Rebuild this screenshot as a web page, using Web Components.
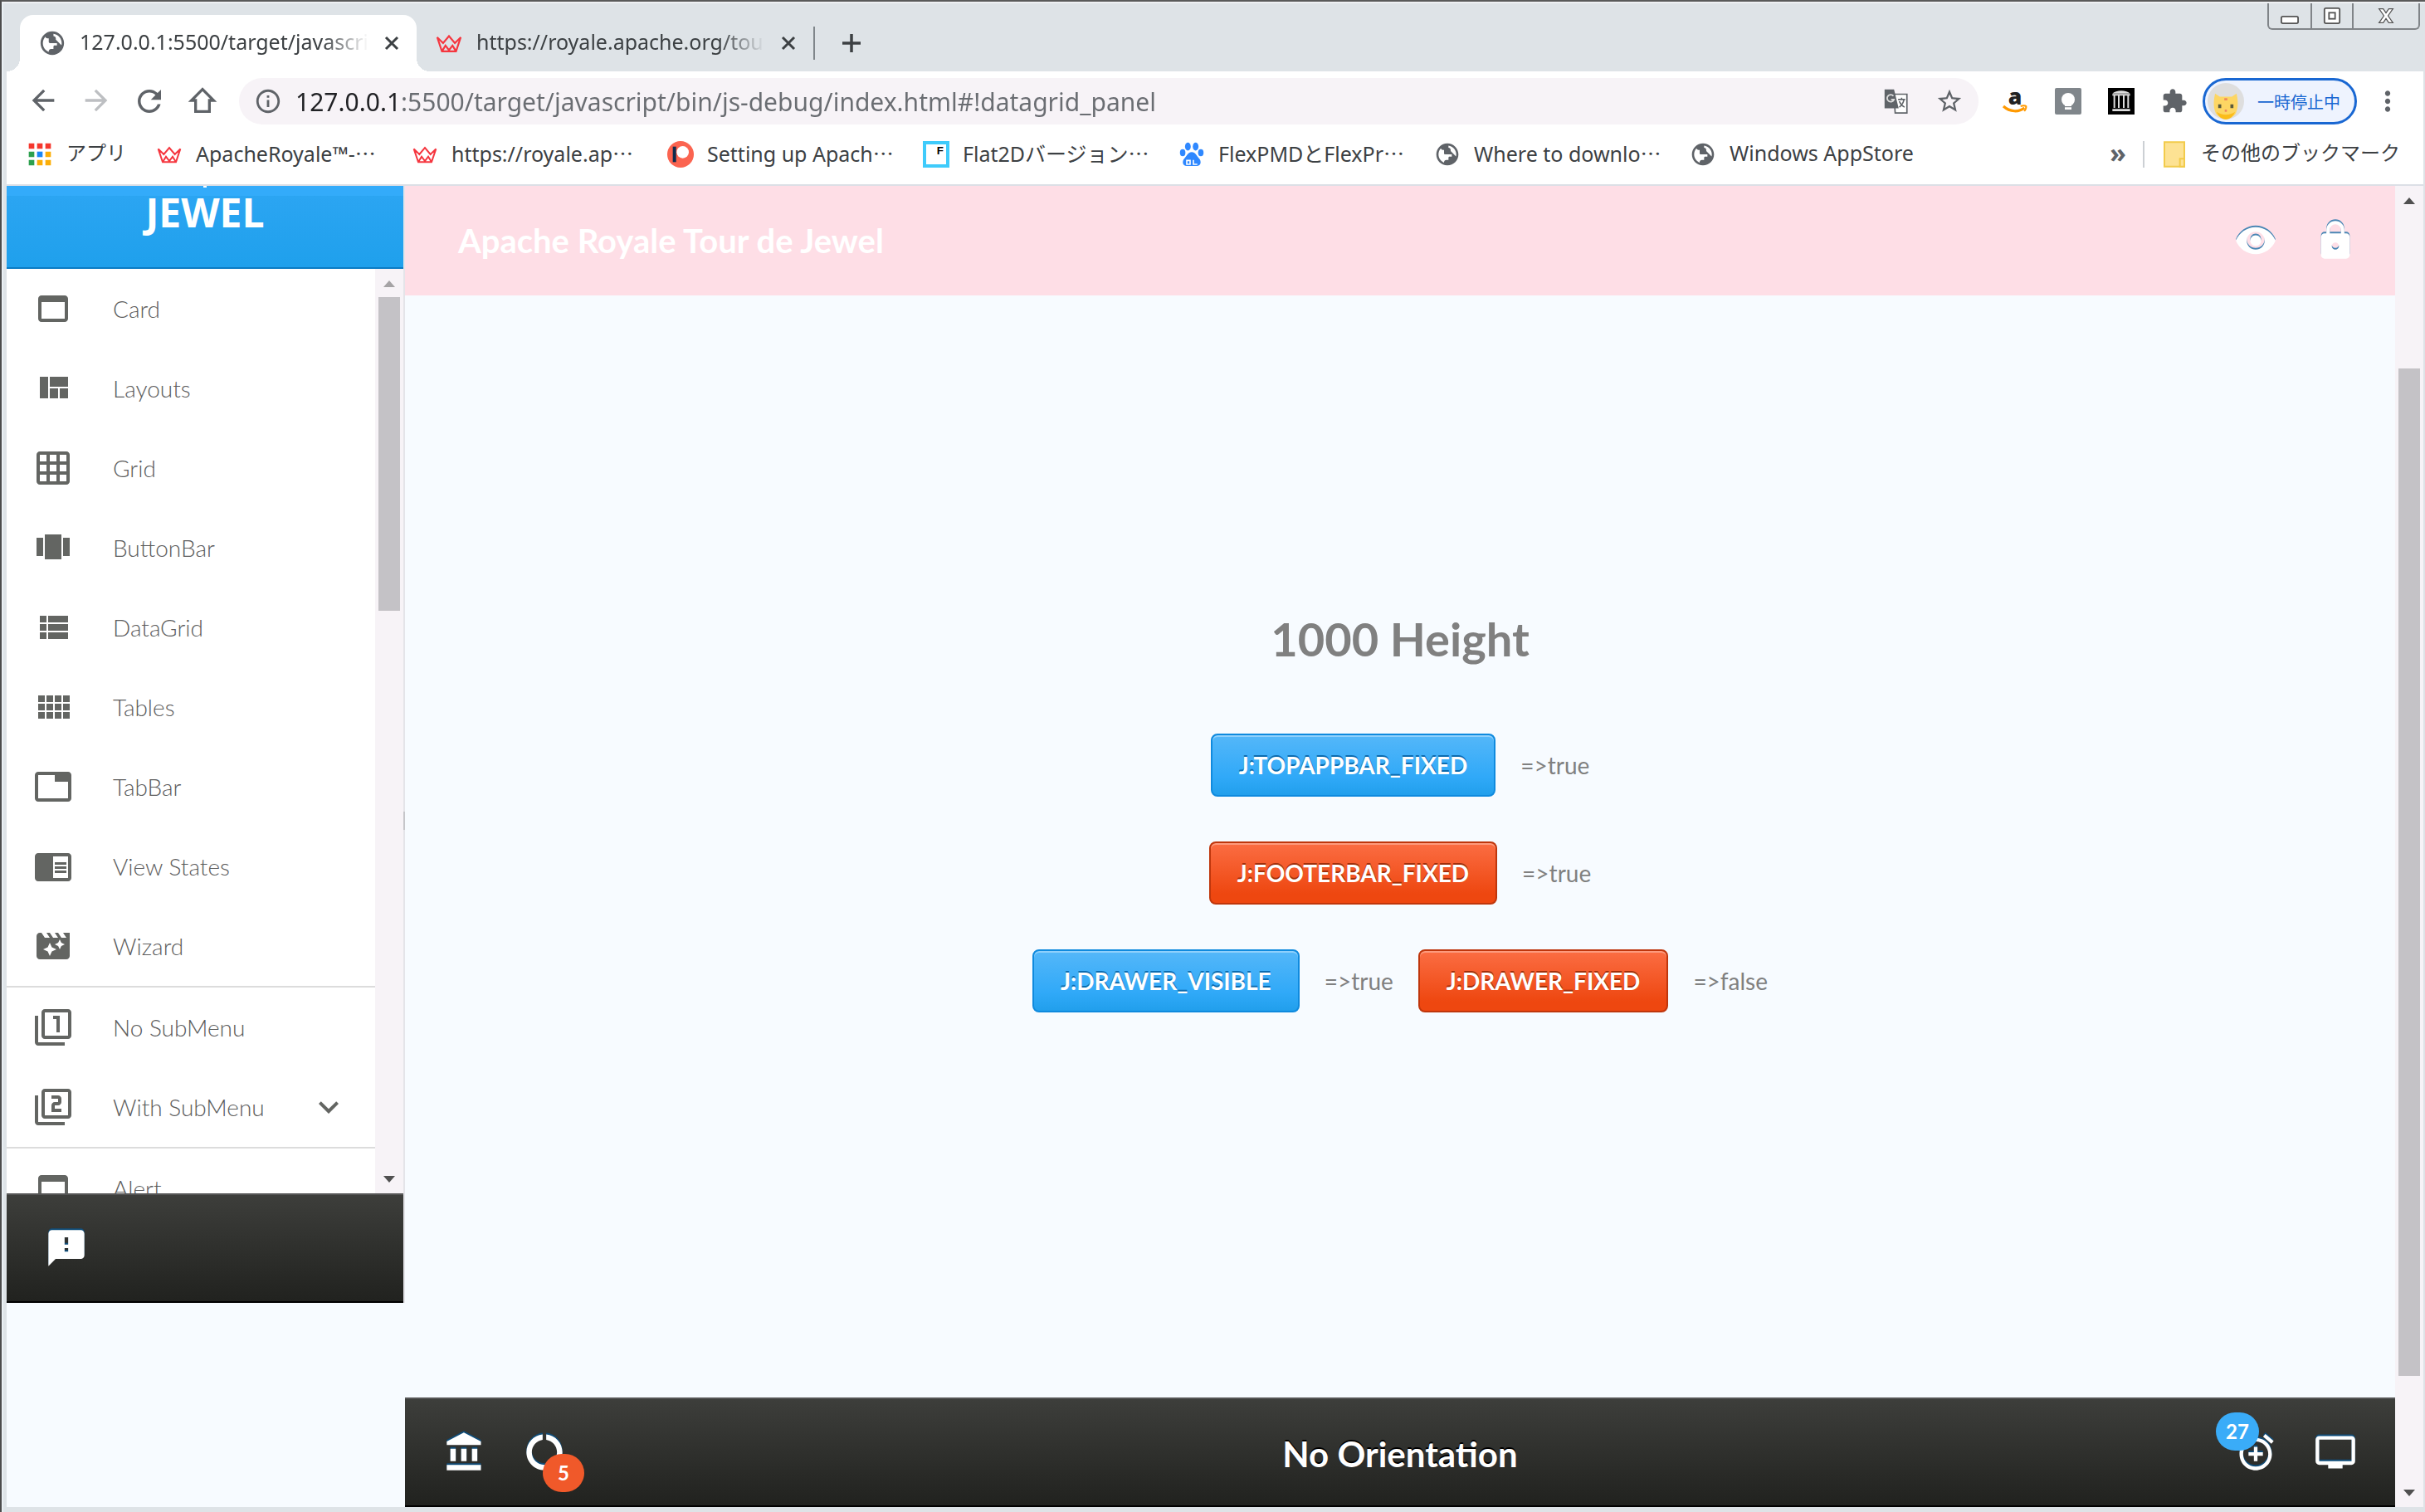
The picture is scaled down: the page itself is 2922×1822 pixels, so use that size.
<!DOCTYPE html>
<html lang="ja">
<head>
<meta charset="utf-8">
<title>Apache Royale Tour de Jewel</title>
<style>
  html, body { height: 100%; margin: 0; }
  body {
    --ui-font: "Noto Sans", "Noto Sans CJK JP", sans-serif;
    --jewel-font: Lato, "Liberation Sans", sans-serif;
    --page-bg: #f7fbff;
    --frame: #dee3e7;
    --track: #f7f3f7;
    font-family: var(--ui-font);
    overflow: hidden;
  }
</style>
</head>
<body>
<browser-window></browser-window>

<script>
const ICONS = {
  globe: '<path d="M12 2C6.48 2 2 6.48 2 12s4.48 10 10 10 10-4.48 10-10S17.52 2 12 2zm-1 17.93c-3.95-.49-7-3.85-7-7.93 0-.62.08-1.21.21-1.79L9 15v1c0 1.1.9 2 2 2v1.93zm6.9-2.54c-.26-.81-1-1.39-1.9-1.39h-1v-3c0-.55-.45-1-1-1H8v-2h2c.55 0 1-.45 1-1V7h2c1.1 0 2-.9 2-2v-.41c2.93 1.19 5 4.06 5 7.41 0 2.08-.8 3.97-2.1 5.39z" transform="rotate(180 12 12)"/>',
  crown: '<path d="M2 7l4 12h12l4-12-5 5-5-6-5 6zM6 19l3-5 3 4 3-4 3 5" fill="none" stroke="#f5363f" stroke-width="1.5"/>',
  close: '<path d="M5 5l14 14M19 5L5 19" fill="none" stroke="currentColor" stroke-width="3"/>',
  plus: '<path d="M12 1v22M1 12h22" fill="none" stroke="currentColor" stroke-width="3.5"/>',
  back: '<path d="M20 11H7.83l5.59-5.59L12 4l-8 8 8 8 1.41-1.41L7.83 13H20v-2z"/>',
  forward: '<path d="M12 4l-1.41 1.41L16.17 11H4v2h12.17l-5.58 5.59L12 20l8-8z"/>',
  reload: '<path d="M17.65 6.35C16.2 4.9 14.21 4 12 4c-4.42 0-7.99 3.58-7.99 8s3.57 8 7.99 8c3.73 0 6.84-2.55 7.73-6h-2.08c-.82 2.33-3.04 4-5.65 4-3.31 0-6-2.69-6-6s2.69-6 6-6c1.66 0 3.14.69 4.22 1.78L13 11h7V4l-2.35 2.35z"/>',
  home: '<path d="M12 4l-8 8h3v8h10v-8h3z" fill="none" stroke="currentColor" stroke-width="2"/>',
  info: '<path d="M11 17h2v-6h-2v6zm1-15C6.48 2 2 6.48 2 12s4.48 10 10 10 10-4.48 10-10S17.52 2 12 2zm0 18c-4.41 0-8-3.59-8-8s3.59-8 8-8 8 3.59 8 8-3.59 8-8 8zM11 9h2V7h-2v2z"/>',
  translate: '<path d="M10 6h11v16H11z" fill="#fff" stroke="#5f6368" stroke-width="1.2"/><path d="M2 2h8l4 16H2z"/><path d="M9.500 7.500A3 3 0 1 0 10 10.500H7.500" fill="none" stroke="#ddd" stroke-width="1.3"/><path d="M13.500 10.500h6M16.500 9v1.500M18.500 10.500c-.5 3-2 5-4 6.500M14.500 12c1 2.500 2.500 4 4.500 5" fill="none" stroke="#5f6368" stroke-width="1.100"/>',
  star: '<path d="M22 9.240l-7.190-.62L12 2 9.190 8.630 2 9.240l5.460 4.730L5.820 21 12 17.270 18.180 21l-1.630-7.030L22 9.240zM12 15.400l-3.760 2.270 1-4.280-3.320-2.880 4.380-.38L12 6.100l1.710 4.040 4.380.38-3.320 2.880 1 4.280L12 15.400z"/>',
  amazon: '<text x="12" y="15" text-anchor="middle" font-family="Open Sans, sans-serif" font-weight="800" font-size="20" fill="#222">a</text><path d="M1.500 16.500c6 5.500 14 5.500 19 1.500" fill="none" stroke="#ff9900" stroke-width="2.400"/><path d="M17 16.500c2-.7 4-.8 5 0 .3 1.500-.4 3-1.600 4.500" fill="none" stroke="#ff9900" stroke-width="1.500"/>',
  bulb: '<rect width="24" height="24" rx="1.500" fill="#80868b"/><circle cx="12" cy="10.500" r="6" fill="#fff"/><path d="M9 15h6v1.500H9zM9 17.500h6v2H9z" fill="#fff"/>',
  archive: '<rect width="24" height="24" fill="#000"/><path d="M4 5c3-3.500 13-3.500 16 0zM4 19h16v2H4zM5 7h1.500v11H5zM9 7h1.500v11H9zM13.500 7H15v11h-1.500zM17.500 7H19v11h-1.500zM4 5.500h16V7H4z" fill="#ddd"/>',
  puzzle: '<path d="M20.500 11H19V7c0-1.100-.9-2-2-2h-4V3.500C13 2.120 11.880 1 10.500 1S8 2.120 8 3.500V5H4c-1.100 0-1.990.9-1.990 2v3.800H3.500c1.490 0 2.700 1.210 2.700 2.700s-1.210 2.700-2.700 2.700H2V20c0 1.100.9 2 2 2h3.800v-1.500c0-1.490 1.210-2.700 2.700-2.700 1.490 0 2.700 1.210 2.700 2.700V22H17c1.100 0 2-.9 2-2v-4h1.500c1.380 0 2.500-1.120 2.500-2.500S21.880 11 20.500 11z"/>',
  avatar: '<circle cx="12" cy="12" r="12" fill="#dedede"/><path d="M5 7l3 2h8l3-2c1 4 1.500 9-.5 13-3 4.500-10 4.500-13 0C3.500 16 4 11 5 7z" fill="#fdd663"/><path d="M6 19c3 2.500 9 2.500 12 0-1 3-3.500 5-6 5s-5-2-6-5z" fill="#fbbc1a"/><path d="M7 14h2v2.500H7zM15 14h2v2.500h-2z" fill="#5a5a3c"/><path d="M11.300 17.500h1.400v1.500h-1.400zM11 10h2v1.500h-2z" fill="#f08a5c"/>',
  kebab: '<path d="M12 8c1.100 0 2-.9 2-2s-.9-2-2-2-2 .9-2 2 .9 2 2 2zm0 2c-1.100 0-2 .9-2 2s.9 2 2 2 2-.9 2-2-.9-2-2-2zm0 6c-1.100 0-2 .9-2 2s.9 2 2 2 2-.9 2-2-.9-2-2-2z"/>',
  apps: '<path d="M2 2h5v5H2zM9.500 2h5v5h-5zM17 2h5v5h-5z" fill="#f5372d"/><path d="M2 9.500h5v5H2zM2 17h5v5H2z" fill="#2da04e"/><path d="M9.500 9.500h5v5h-5z" fill="#1a86f5"/><path d="M17 9.500h5v5h-5zM9.500 17h5v5h-5zM17 17h5v5h-5z" fill="#fbae08"/>',
  patreon: '<circle cx="12" cy="12" r="12" fill="#fb6450"/><circle cx="14" cy="10" r="5.500" fill="#fff"/><path d="M5 5h3v14H5z" fill="#0d2b4d"/>',
  flat: '<rect x="1.500" y="1.500" width="21" height="21" fill="#fff" stroke="#3fcbfb" stroke-width="3"/><text x="12.500" y="12" font-family="Liberation Sans, sans-serif" font-weight="bold" font-size="10" fill="#000">F</text>',
  paw: '<ellipse cx="8.500" cy="5" rx="2.600" ry="3.600"/><ellipse cx="15.500" cy="5" rx="2.600" ry="3.600"/><ellipse cx="3.800" cy="10.500" rx="2.500" ry="3.200"/><ellipse cx="20.200" cy="10.500" rx="2.500" ry="3.200"/><path d="M12 10c3.500 0 4 3 6.500 5.500s2 7-2 7h-9c-4 0-4.500-4.500-2-7S8.500 10 12 10z"/><path d="M7.500 17.500h3v3.500h-3zM13.500 17v4h3.500" fill="none" stroke="#fff" stroke-width="1.200"/>',
  folder: '<path d="M3 1h18v22H3z" fill="#fde293" stroke="#f2cb4b" stroke-width="1.500"/><path d="M17 16h4v7h-4z" fill="#fde293" stroke="#f2cb4b" stroke-width="1.500"/>',
  card: '<path d="M19 4H5c-1.110 0-2 .9-2 2v12c0 1.100.89 2 2 2h14c1.100 0 2-.9 2-2V6c0-1.100-.89-2-2-2zm0 14H5V8h14v10z"/>',
  layouts: '<path d="M10 18h5v-6h-5v6zm-6 0h5V5H4v13zm12 0h5v-6h-5v6zM10 5v6h11V5H10z"/>',
  grid: '<path d="M20 2H4c-1.100 0-2 .9-2 2v16c0 1.100.9 2 2 2h16c1.100 0 2-.9 2-2V4c0-1.100-.9-2-2-2zM8 20H4v-4h4v4zm0-6H4v-4h4v4zm0-6H4V4h4v4zm6 12h-4v-4h4v4zm0-6h-4v-4h4v4zm0-6h-4V4h4v4zm6 12h-4v-4h4v4zm0-6h-4v-4h4v4zm0-6h-4V4h4v4z"/>',
  carousel: '<path d="M7 19h10V4H7v15zm-5-2h4V6H2v11zM18 6v11h4V6h-4z"/>',
  list: '<path d="M4 14h4v-4H4v4zm0 5h4v-4H4v4zM4 9h4V5H4v4zm5 5h12v-4H9v4zm0 5h12v-4H9v4zM9 5v4h12V5H9z"/>',
  comfy: '<path d="M3 9h4V5H3v4zm0 5h4v-4H3v4zm5 0h4v-4H8v4zm5 0h4v-4h-4v4zM8 9h4V5H8v4zm5-4v4h4V5h-4zm5 9h4v-4h-4v4zM3 19h4v-4H3v4zm5 0h4v-4H8v4zm5 0h4v-4h-4v4zm5 0h4v-4h-4v4zm0-14v4h4V5h-4z"/>',
  tab: '<path d="M21 3H3c-1.100 0-2 .9-2 2v14c0 1.100.9 2 2 2h18c1.100 0 2-.9 2-2V5c0-1.100-.9-2-2-2zm0 16H3V5h10v4h8v10z"/>',
  reader: '<path d="M13 12h7v1.500h-7zm0-2.500h7V11h-7zm0 5h7V16h-7zM21 4H3c-1.100 0-2 .9-2 2v13c0 1.100.9 2 2 2h18c1.100 0 2-.9 2-2V6c0-1.100-.9-2-2-2zm0 15h-9V6h9v13z"/>',
  movie: '<path d="M18 4l2 3h-3l-2-3h-2l2 3h-3l-2-3H8l2 3H7L5 4H4c-1.100 0-1.990.9-1.990 2L2 18c0 1.100.9 2 2 2h16c1.100 0 2-.9 2-2V4h-4zm-6.750 11.250L10 18l-1.250-2.750L6 14l2.750-1.250L10 10l1.250 2.750L14 14l-2.750 1.250zm5.690-3.310L16 14l-.94-2.060L13 11l2.060-.94L16 8l.94 2.060L19 11l-2.060.94z"/>',
  filter1: '<path d="M3 5H1v16c0 1.100.9 2 2 2h16v-2H3V5zm11 10h2V5h-4v2h2v8zm7-14H7c-1.100 0-2 .9-2 2v14c0 1.100.9 2 2 2h14c1.100 0 2-.9 2-2V3c0-1.100-.9-2-2-2zm0 16H7V3h14v14z"/>',
  filter2: '<path d="M3 5H1v16c0 1.100.9 2 2 2h16v-2H3V5zm18-4H7c-1.100 0-2 .9-2 2v14c0 1.100.9 2 2 2h14c1.100 0 2-.9 2-2V3c0-1.100-.9-2-2-2zm0 16H7V3h14v14zm-4-4h-4v-2h2c1.100 0 2-.89 2-2V7c0-1.110-.9-2-2-2h-4v2h4v2h-2c-1.100 0-2 .89-2 2v4h6v-2z"/>',
  expand: '<path d="M16.590 8.590L12 13.170 7.410 8.590 6 10l6 6 6-6z"/>',
  feedback: '<path d="M20 2H4c-1.100 0-1.990.9-1.990 2L2 22l4-4h14c1.100 0 2-.9 2-2V4c0-1.100-.9-2-2-2zm-7 12h-2v-2h2v2zm0-4h-2V6h2v4z"/>',
  bank: '<path d="M4 10v7h3v-7H4zm6 0v7h3v-7h-3zM2 22h19v-3H2v3zm14-12v7h3v-7h-3zm-4.500-9L2 6v2h19V6l-9.500-5z"/>',
  usage: '<path d="M13 2.050v3.030c3.390.49 6 3.390 6 6.920 0 .9-.18 1.750-.48 2.540l2.600 1.530c.56-1.240.88-2.620.88-4.070 0-5.180-3.950-9.450-9-9.950zM12 19c-3.870 0-7-3.130-7-7 0-3.530 2.610-6.430 6-6.920V2.050c-5.060.5-9 4.760-9 9.950 0 5.520 4.470 10 9.990 10 3.310 0 6.240-1.610 8.060-4.090l-2.600-1.530C16.170 17.980 14.210 19 12 19z"/>',
  alarm: '<path d="M7.880 3.390L6.600 1.860 2 5.710l1.290 1.530 4.590-3.850zM22 5.720l-4.600-3.860-1.290 1.530 4.600 3.860L22 5.720zM12 4c-4.970 0-9 4.030-9 9s4.020 9 9 9c4.970 0 9-4.030 9-9s-4.030-9-9-9zm0 16c-3.870 0-7-3.130-7-7s3.130-7 7-7 7 3.130 7 7-3.130 7-7 7zm1-11h-2v3H8v2h3v3h2v-3h3v-2h-3V9z"/>',
  tv: '<path d="M21 3H3c-1.100 0-2 .9-2 2v12c0 1.100.9 2 2 2h5v2h8v-2h5c1.100 0 1.990-.9 1.990-2L23 5c0-1.100-.9-2-2-2zm0 14H3V5h18v12z"/>',
  eye: '<path d="M12 4.500C7 4.500 2.730 7.610 1 12c1.730 4.390 6 7.500 11 7.500s9.270-3.110 11-7.500c-1.730-4.390-6-7.500-11-7.500zM12 17c-2.760 0-5-2.240-5-5s2.240-5 5-5 5 2.240 5 5-2.240 5-5 5zm0-8c-1.660 0-3 1.340-3 3s1.340 3 3 3 3-1.340 3-3-1.340-3-3-3z"/>',
  lock: '<path d="M18 8h-1V6c0-2.760-2.240-5-5-5S7 3.240 7 6v2H6c-1.100 0-2 .9-2 2v10c0 1.100.9 2 2 2h12c1.100 0 2-.9 2-2V10c0-1.100-.9-2-2-2zm-6 9c-1.100 0-2-.9-2-2s.9-2 2-2 2 .9 2 2-.9 2-2 2zm3.100-9H8.900V6c0-1.710 1.390-3.100 3.100-3.100 1.710 0 3.100 1.390 3.100 3.100v2z"/>',
  minimize: '<rect x="1" y="13" width="22" height="9" rx="2" fill="#fff" stroke="#555" stroke-width="2"/>',
  maximize: '<rect x="2" y="2" width="20" height="20" rx="2" fill="#fff" stroke="#555" stroke-width="2"/><rect x="8" y="8" width="8" height="8" fill="#fff" stroke="#555" stroke-width="2"/>',
  winclose: '<path d="M2 2h6l4 6 4-6h6l-7 10 7 10h-6l-4-6-4 6H2l7-10z" fill="#fff" stroke="#555" stroke-width="1.500"/>',
};

class UiIcon extends HTMLElement {
  constructor() {
    super();
    this.attachShadow({ mode: 'open' });
  }
  connectedCallback() {
    const size = this.getAttribute('size') || 48;
    this.shadowRoot.innerHTML = `
      <style>
        :host { display: block; flex: none; width: ${size}px; height: ${size}px; }
        svg { display: block; width: 100%; height: 100%; fill: currentColor; overflow: visible; }
      </style>
      <svg viewBox="0 0 24 24" aria-hidden="true">${ICONS[this.getAttribute('name')]}</svg>
    `;
  }
}
customElements.define('ui-icon', UiIcon);

class ScrollTrack extends HTMLElement {
  constructor() {
    super();
    this.attachShadow({ mode: 'open' });
    this.shadowRoot.innerHTML = `
      <style>
        :host {
          display: flex;
          flex-direction: column;
          flex: none;
          width: 34px;
          background: var(--track);
        }
        svg { display: block; width: 34px; height: 34px; fill: #505050; }
        .up { fill: var(--up-arrow, #505050); }
        .before { flex: var(--before, 0) 1 0; }
        .thumb { flex: var(--thumb, 1) 1 0; margin: 0 4px; background: #c4c2c6; }
        .after { flex: var(--after, 1) 1 0; }
      </style>
      <svg class="up" viewBox="0 0 34 34"><path d="M10 22l7-8 7 8z"/></svg>
      <div class="before"></div>
      <div class="thumb"></div>
      <div class="after"></div>
      <svg viewBox="0 0 34 34"><path d="M10 13l7 8 7-8z"/></svg>
    `;
  }
}
customElements.define('scroll-track', ScrollTrack);

class BrowserTab extends HTMLElement {
  constructor() {
    super();
    this.attachShadow({ mode: 'open' });
    this.shadowRoot.innerHTML = `
      <style>
        :host {
          display: flex;
          align-items: center;
          gap: 16px;
          box-sizing: border-box;
          position: relative;
          width: 478px;
          height: 68px;
          padding: 0 18px 0 22px;
          border-radius: 16px 16px 0 0;
          color: #3c4043;
          font-size: 25px;
        }
        :host([active]) { background: #fff; }
        /* curved feet of the active tab */
        :host([active])::before, :host([active])::after {
          content: "";
          position: absolute;
          bottom: 0;
          width: 16px;
          height: 16px;
        }
        :host([active])::before { left: -16px; background: radial-gradient(circle at 0 0, transparent 16px, #fff 16px); }
        :host([active])::after { right: -16px; background: radial-gradient(circle at 100% 0, transparent 16px, #fff 16px); }
        ::slotted(ui-icon) { color: #5f6368; }
        .title {
          flex: 1;
          padding-bottom: 4px;
          overflow: hidden;
          white-space: nowrap;
          -webkit-mask-image: linear-gradient(to right, #000 84%, transparent);
          mask-image: linear-gradient(to right, #000 84%, transparent);
        }
        button { border: 0; padding: 0; background: none; color: inherit; }
      </style>
      <slot name="icon"></slot>
      <span class="title"><slot></slot></span>
      <button aria-label="Close tab"><ui-icon name="close" size="24"></ui-icon></button>
    `;
  }
}
customElements.define('browser-tab', BrowserTab);

class TabStrip extends HTMLElement {
  constructor() {
    super();
    this.attachShadow({ mode: 'open' });
    this.shadowRoot.innerHTML = `
      <style>
        :host {
          display: flex;
          align-items: flex-end;
          height: 82px;
          padding-left: 16px;
          background: var(--frame);
        }
        .new {
          display: flex;
          align-items: center;
          align-self: flex-end;
          height: 68px;
        }
        .new i { width: 2px; height: 40px; margin-right: 32px; background: #80868b; }
        button { border: 0; padding: 0; background: none; color: #3c4043; }
        .win {
          display: flex;
          align-self: flex-start;
          margin: 0 4px 0 auto;
          border: 2px solid #808488;
          border-top: 0;
          border-radius: 0 0 6px 6px;
        }
        .win button { display: flex; justify-content: center; align-items: center; width: 50px; height: 30px; }
        .win button + button { border-left: 2px solid #808488; }
        .win button:last-child { width: 80px; }
      </style>
      <browser-tab active><ui-icon slot="icon" name="globe" size="34"></ui-icon>127.0.0.1:5500/target/javascript/bin</browser-tab>
      <browser-tab><ui-icon slot="icon" name="crown" size="34"></ui-icon>https://royale.apache.org/tourdejewel</browser-tab>
      <div class="new"><i></i><button aria-label="New tab"><ui-icon name="plus" size="24"></ui-icon></button></div>
      <div class="win">
        <button aria-label="Minimize"><ui-icon name="minimize" size="22"></ui-icon></button>
        <button aria-label="Maximize"><ui-icon name="maximize" size="22"></ui-icon></button>
        <button aria-label="Close window"><ui-icon name="winclose" size="20"></ui-icon></button>
      </div>
    `;
  }
}
customElements.define('tab-strip', TabStrip);

class AddressBar extends HTMLElement {
  constructor() {
    super();
    this.attachShadow({ mode: 'open' });
    this.shadowRoot.innerHTML = `
      <style>
        :host {
          display: flex;
          align-items: center;
          height: 56px;
          padding: 8px 24px 0 12px;
          background: #fff;
          color: #5f6368;
        }
        button { display: flex; justify-content: center; border: 0; padding: 0; background: none; color: inherit; font: inherit; }
        .nav { display: flex; width: 268px; }
        .nav button { width: 64px; }
        .off { color: #bdbfc2; }
        form {
          display: flex;
          flex: 1;
          align-items: center;
          gap: 16px;
          height: 56px;
          padding: 0 18px;
          border-radius: 28px;
          background: var(--track);
        }
        input {
          flex: 1;
          min-width: 0;
          border: 0;
          padding: 0;
          outline: 0;
          font: 30px var(--ui-font);
          color: #5f6368;
          /* the host part of the address is darker than the rest */
          background: linear-gradient(to right, #202124 128px, #6a6d72 128px);
          -webkit-background-clip: text;
          background-clip: text;
          -webkit-text-fill-color: transparent;
        }
        .star { margin-left: 14px; }
        .ext { display: flex; gap: 32px; margin-left: 28px; align-items: center; }
        .profile {
          box-sizing: border-box;
          align-items: center;
          justify-content: flex-start;
          gap: 16px;
          width: 186px;
          height: 56px;
          margin-left: 18px;
          padding-left: 3px;
          border: 3px solid #1967d2;
          border-radius: 28px;
          background: #eef3fe;
          color: #1967d2;
          font-size: 20px;
          white-space: nowrap;
        }
        .menu { margin-left: 18px; }
      </style>
      <div class="nav">
        <button aria-label="Back"><ui-icon name="back" size="40"></ui-icon></button>
        <button aria-label="Forward" class="off"><ui-icon name="forward" size="40"></ui-icon></button>
        <button aria-label="Reload"><ui-icon name="reload" size="42"></ui-icon></button>
        <button aria-label="Home"><ui-icon name="home" size="40"></ui-icon></button>
      </div>
      <form>
        <ui-icon name="info" size="34"></ui-icon>
        <input type="text" aria-label="Address" value="127.0.0.1:5500/target/javascript/bin/js-debug/index.html#!datagrid_panel">
        <button type="button" aria-label="Translate"><ui-icon name="translate" size="34"></ui-icon></button>
        <button type="button" aria-label="Bookmark" class="star"><ui-icon name="star" size="34"></ui-icon></button>
      </form>
      <div class="ext">
        <button aria-label="Amazon"><ui-icon name="amazon" size="32"></ui-icon></button>
        <button aria-label="Keep"><ui-icon name="bulb" size="32"></ui-icon></button>
        <button aria-label="Archive"><ui-icon name="archive" size="32"></ui-icon></button>
        <button aria-label="Extensions"><ui-icon name="puzzle" size="32"></ui-icon></button>
      </div>
      <button class="profile"><ui-icon name="avatar" size="44"></ui-icon>一時停止中</button>
      <button class="menu" aria-label="Menu"><ui-icon name="kebab" size="38"></ui-icon></button>
    `;
  }
}
customElements.define('address-bar', AddressBar);

class BookmarkLink extends HTMLElement {
  constructor() {
    super();
    this.attachShadow({ mode: 'open' });
  }
  connectedCallback() {
    const cut = this.hasAttribute('cut') ? '<span class="dots">…</span>' : '';
    this.shadowRoot.innerHTML = `
      <style>
        :host { display: block; flex: none; font-size: 24px; }
        :host([fixed]) { width: 272px; font-size: 25px; }
        a {
          display: flex;
          align-items: center;
          gap: 16px;
          color: #3c4043;
          line-height: 32px;
          white-space: nowrap;
          text-decoration: none;
        }
        .label { padding-bottom: 4px; }
        .dots { font-family: "Noto Sans CJK JP", sans-serif; }
        ui-icon { color: #5f6368; }
        ui-icon[name="paw"] { color: #2f88ff; }
      </style>
      <a href="#"><ui-icon name="${this.getAttribute('icon')}" size="32"></ui-icon><span class="label"><slot></slot>${cut}</span></a>
    `;
  }
}
customElements.define('bookmark-link', BookmarkLink);

class BookmarkBar extends HTMLElement {
  constructor() {
    super();
    this.attachShadow({ mode: 'open' });
    this.shadowRoot.innerHTML = `
      <style>
        :host {
          display: flex;
          align-items: center;
          gap: 36px;
          height: 72px;
          padding: 0 28px 0 24px;
          border-bottom: 2px solid #dcdfe6;
          background: #fff;
        }
        .more { display: flex; align-items: center; gap: 20px; margin-left: auto; }
        .more button { border: 0; padding: 0 0 4px; background: none; color: #5f6368; font: bold 32px/32px var(--ui-font); }
        .more i { width: 2px; height: 32px; background: #ccd0d4; }
      </style>
      <bookmark-link icon="apps">アプリ</bookmark-link>
      <bookmark-link fixed cut icon="crown">ApacheRoyale™-</bookmark-link>
      <bookmark-link fixed cut icon="crown">https://royale.ap</bookmark-link>
      <bookmark-link fixed cut icon="patreon">Setting up Apach</bookmark-link>
      <bookmark-link fixed cut icon="flat">Flat2Dバージョン</bookmark-link>
      <bookmark-link fixed cut icon="paw">FlexPMDとFlexPr</bookmark-link>
      <bookmark-link fixed cut icon="globe">Where to downlo</bookmark-link>
      <bookmark-link fixed icon="globe">Windows AppStore</bookmark-link>
      <div class="more">
        <button aria-label="More bookmarks">»</button>
        <i></i>
        <bookmark-link icon="folder">その他のブックマーク</bookmark-link>
      </div>
    `;
  }
}
customElements.define('bookmark-bar', BookmarkBar);

class NavItem extends HTMLElement {
  constructor() {
    super();
    this.attachShadow({ mode: 'open' });
  }
  connectedCallback() {
    const arrow = this.hasAttribute('expandable') ? '<ui-icon class="arrow" name="expand"></ui-icon>' : '';
    this.shadowRoot.innerHTML = `
      <style>
        :host { display: block; }
        :host([divider]) { border-top: 2px solid #dcdcdc; }
        a {
          display: flex;
          align-items: center;
          gap: 48px;
          height: 96px;
          padding: 0 32px;
          color: #5c5c5c;
          font-size: 28px;
          font-weight: 300;
          line-height: 36px;
          text-decoration: none;
        }
        ui-icon { color: #636562; }
        .arrow { margin-left: auto; }
      </style>
      <a href="#"><ui-icon name="${this.getAttribute('icon')}"></ui-icon><span><slot></slot></span>${arrow}</a>
    `;
  }
}
customElements.define('nav-item', NavItem);

class BarIcon extends HTMLElement {
  constructor() {
    super();
    this.attachShadow({ mode: 'open' });
  }
  connectedCallback() {
    const badge = this.getAttribute('badge');
    this.shadowRoot.innerHTML = `
      <style>
        :host { display: block; position: relative; }
        button { display: block; border: 0; padding: 0; background: none; color: #fff; }
        ui-icon { filter: drop-shadow(0 -2px 0 var(--icon-shadow, #0f4c78)); }
        .badge {
          position: absolute;
          top: 28px;
          left: 24px;
          min-width: 50px;
          border-radius: 23px;
          background: #f0592a;
          color: #fff;
          font-size: 24px;
          font-weight: 700;
          line-height: 46px;
          text-align: center;
        }
        :host([info]) .badge { top: -22px; left: -22px; min-width: 52px; background: #3aacf8; }
      </style>
      <button aria-label="${this.getAttribute('label')}"><ui-icon name="${this.getAttribute('icon')}" size="52"></ui-icon></button>
      ${badge ? `<span class="badge">${badge}</span>` : ''}
    `;
  }
}
customElements.define('bar-icon', BarIcon);

class JewelDrawer extends HTMLElement {
  constructor() {
    super();
    this.attachShadow({ mode: 'open' });
    this.shadowRoot.innerHTML = `
      <style>
        :host {
          display: flex;
          flex-direction: column;
          flex: none;
          box-sizing: border-box;
          position: relative;
          width: 480px;
          margin-bottom: 246px;
          border-right: 2px solid #e4e4e9;
        }
        header {
          box-sizing: border-box;
          height: 100px;
          border-bottom: 2px solid #0b7bc4;
          background: linear-gradient(#33abfa 12px, #2ba5f2 12px, #1fa0ec);
          color: #fff;
          font: 700 48px/64px "Open Sans", sans-serif;
          text-align: center;
        }
        /* tail of the logo line scrolled out above */
        header::before { content: ""; display: block; width: 4px; height: 2px; margin: 0 auto -2px; background: #fff; }
        .body { display: flex; flex: 1; min-height: 0; background: #fff; }
        nav { flex: 1; overflow: hidden; }
        scroll-track { --thumb: 378; --after: 668; --up-arrow: #a5a3a5; }
        footer {
          display: flex;
          align-items: center;
          box-sizing: border-box;
          height: 132px;
          padding: 0 46px;
          border-top: 2px solid #555;
          border-bottom: 2px solid #000;
          background: linear-gradient(#3d3e3b, #21221f);
        }
        /* drag handle on the edge */
        .grip { position: absolute; top: 56%; right: -2px; width: 2px; height: 22px; background: #c6c6ca; }
      </style>
      <header>JEWEL</header>
      <div class="body">
        <nav>
          <nav-item icon="card">Card</nav-item>
          <nav-item icon="layouts">Layouts</nav-item>
          <nav-item icon="grid">Grid</nav-item>
          <nav-item icon="carousel">ButtonBar</nav-item>
          <nav-item icon="list">DataGrid</nav-item>
          <nav-item icon="comfy">Tables</nav-item>
          <nav-item icon="tab">TabBar</nav-item>
          <nav-item icon="reader">View States</nav-item>
          <nav-item icon="movie">Wizard</nav-item>
          <nav-item icon="filter1" divider>No SubMenu</nav-item>
          <nav-item icon="filter2" expandable>With SubMenu</nav-item>
          <nav-item icon="card" divider>Alert</nav-item>
        </nav>
        <scroll-track></scroll-track>
      </div>
      <footer><bar-icon icon="feedback" label="Feedback"></bar-icon></footer>
      <div class="grip"></div>
    `;
  }
}
customElements.define('jewel-drawer', JewelDrawer);

class JewelButton extends HTMLElement {
  constructor() {
    super();
    this.attachShadow({ mode: 'open' });
    this.shadowRoot.innerHTML = `
      <style>
        :host { display: block; }
        button {
          box-sizing: border-box;
          height: 76px;
          padding: 0 32px;
          border: 2px solid #0f8ade;
          border-radius: 8px;
          background: linear-gradient(#54b7f9, #30a9f8 70%, #219fec);
          box-shadow: inset 0 2px 0 #8fd0fc;
          color: #fff;
          font: 700 28px/36px var(--jewel-font);
          text-shadow: 0 -2px 0 #0b6cb0;
        }
        :host([emphasized]) button {
          border-color: #bf360c;
          background: linear-gradient(#fb6d43, #ee4710 85%);
          box-shadow: inset 0 2px 0 #fd9b7e;
          text-shadow: 0 -2px 0 #a12f0a;
        }
      </style>
      <button><slot></slot></button>
    `;
  }
}
customElements.define('jewel-button', JewelButton);

class JewelMain extends HTMLElement {
  constructor() {
    super();
    this.attachShadow({ mode: 'open' });
    this.shadowRoot.innerHTML = `
      <style>
        :host { display: flex; flex-direction: column; flex: 1; min-width: 0; }
        header, footer {
          display: flex;
          align-items: center;
          justify-content: space-between;
          box-sizing: border-box;
          height: 132px;
          padding: 0 46px;
          color: #fff;
        }
        header { padding-left: 64px; background: #fedee6; --icon-shadow: #4a86b4; }
        footer {
          border-top: 2px solid #555;
          border-bottom: 2px solid #000;
          background: linear-gradient(#3d3e3b, #21221f);
        }
        h1, h2 { margin: 0; font-size: 42px; line-height: 52px; font-weight: 700; }
        h1 { font-size: 40px; }
        footer h2 { padding-top: 4px; text-shadow: 0 -2px 0 #000; }
        .icons { display: flex; gap: 44px; }
        main {
          display: flex;
          flex: 1;
          flex-direction: column;
          align-items: center;
          gap: 54px;
          padding-top: 378px;
          color: #808080;
          font-size: 28px;
        }
        main h2 { margin-bottom: 24px; font-size: 56px; line-height: 72px; }
        .row { display: flex; align-items: center; gap: 30px; }
      </style>
      <header>
        <h1>Apache Royale Tour de Jewel</h1>
        <div class="icons">
          <bar-icon icon="eye" label="Show"></bar-icon>
          <bar-icon icon="lock" label="Lock"></bar-icon>
        </div>
      </header>
      <main>
        <h2>1000 Height</h2>
        <div class="row"><jewel-button>J:TOPAPPBAR_FIXED</jewel-button><span>=&gt;true</span></div>
        <div class="row"><jewel-button emphasized>J:FOOTERBAR_FIXED</jewel-button><span>=&gt;true</span></div>
        <div class="row">
          <jewel-button>J:DRAWER_VISIBLE</jewel-button><span>=&gt;true</span>
          <jewel-button emphasized>J:DRAWER_FIXED</jewel-button><span>=&gt;false</span>
        </div>
      </main>
      <footer>
        <div class="icons">
          <bar-icon icon="bank" label="Bank"></bar-icon>
          <bar-icon icon="usage" label="Data usage" badge="5"></bar-icon>
        </div>
        <h2>No Orientation</h2>
        <div class="icons">
          <bar-icon icon="alarm" label="Alarms" badge="27" info></bar-icon>
          <bar-icon icon="tv" label="Screen"></bar-icon>
        </div>
      </footer>
    `;
  }
}
customElements.define('jewel-main', JewelMain);

class BrowserWindow extends HTMLElement {
  constructor() {
    super();
    this.attachShadow({ mode: 'open' });
    this.shadowRoot.innerHTML = `
      <style>
        :host {
          display: flex;
          flex-direction: column;
          box-sizing: border-box;
          height: 100vh;
          border-top: 2px solid #5a5a5a;
          border-left: 2px solid #4c4c4c;
          background: var(--frame);
        }
        .frame {
          display: flex;
          flex: 1;
          flex-direction: column;
          min-height: 0;
          padding: 0 2px 6px 4px;
          border-top: 2px solid #eef0f3;
          border-left: 2px solid #eaf0f4;
        }
        .page {
          display: flex;
          flex: 1;
          min-height: 0;
          background: var(--page-bg);
          font-family: var(--jewel-font);
        }
        .page > scroll-track { --before: 186; --thumb: 1214; --after: 124; }
      </style>
      <div class="frame">
        <tab-strip></tab-strip>
        <address-bar></address-bar>
        <bookmark-bar></bookmark-bar>
        <div class="page">
          <jewel-drawer></jewel-drawer>
          <jewel-main></jewel-main>
          <scroll-track></scroll-track>
        </div>
      </div>
    `;
  }
}
customElements.define('browser-window', BrowserWindow);
</script>
</body>
</html>
